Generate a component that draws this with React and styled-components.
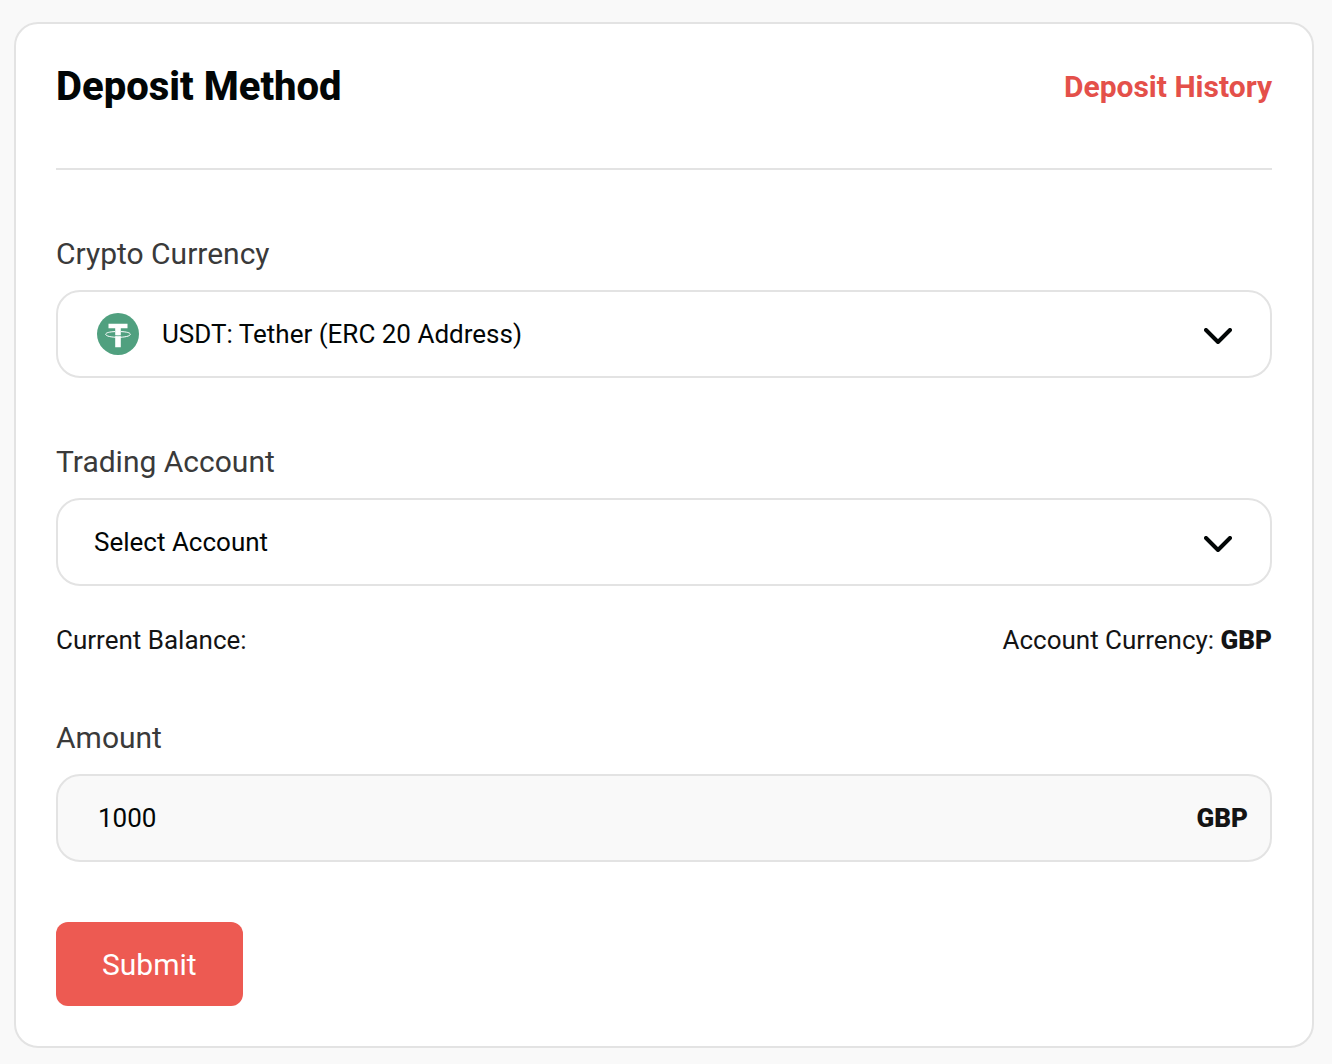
import React, { useState } from "react";
import styled, { createGlobalStyle, css } from "styled-components";

const GlobalStyle = createGlobalStyle`
  * {
    box-sizing: border-box;
  }
  body {
    margin: 0;
    background: #f9f9f9;
    color: #141414;
    font-family: Roboto, "Liberation Sans", sans-serif;
    font-size: 26px;
  }
`;

const Page = styled.main`
  padding: 22px 18px 16px 14px;
`;
const Card = styled.form`
  display: flex;
  flex-direction: column;
  padding: 40px;
  border: 2px solid #e3e3e3;
  border-radius: 24px;
  background: #fff;
`;
const Header = styled.header`
  display: flex;
  justify-content: space-between;
  align-items: center;
  padding-bottom: 58px;
  border-bottom: 2px solid #e3e3e3;
`;
const Title = styled.h1`
  margin: 0;
  font-size: 40px;
  font-weight: 800;
  line-height: 46px;
  color: #020606;
`;
const HistoryLink = styled.a`
  font-size: 30px;
  font-weight: 700;
  line-height: 46px;
  color: #e4504a;
  text-decoration: none;
`;
const Field = styled.div`
  display: flex;
  flex-direction: column;
  gap: 16px;
  margin-top: ${(props) => props.$top || 64}px;
`;
const Label = styled.label`
  font-size: 30px;
  line-height: 40px;
  color: #3a3a3a;
`;
const Control = styled.div`
  position: relative;
  display: flex;
`;
const controlStyle = css`
  flex: 1;
  min-width: 0;
  height: 88px;
  border: 2px solid #e3e3e3;
  border-radius: 24px;
  font-family: inherit;
  font-size: 26px;
  color: #020606;
`;
const Select = styled.select`
  ${controlStyle}
  appearance: none;
  padding: 0 88px 0 ${(props) => (props.$icon ? 104 : 36)}px;
  background: #fff;
  cursor: pointer;
`;
const Input = styled.input`
  ${controlStyle}
  padding: 0 88px 0 40px;
  background: #f9f9f9;
`;
const Adornment = styled.span`
  position: absolute;
  top: 0;
  bottom: 0;
  display: flex;
  align-items: center;
  pointer-events: none;
`;
const Leading = styled(Adornment)`
  left: 41px;
`;
const Arrow = styled(Adornment)`
  right: 40px;
  padding-top: 4px;
`;
const Unit = styled(Adornment)`
  right: 24px;
`;
const Currency = styled.strong`
  font-weight: 900;
  color: #141414;
`;
const BalanceRow = styled.div`
  display: flex;
  justify-content: space-between;
  margin-top: 36px;
  line-height: 36px;
`;
const SubmitButton = styled.button`
  align-self: flex-start;
  height: 84px;
  margin-top: 60px;
  padding: 0 46px;
  border: none;
  border-radius: 12px;
  background: #ed5a52;
  color: #fff;
  font-family: inherit;
  font-size: 30px;
  cursor: pointer;
`;

const TetherIcon = () => (
  <svg width="42" height="42" viewBox="0 0 42 42" aria-hidden="true">
    <circle cx="21" cy="21" r="21" fill="#50a07f" />
    <path d="M11.5 10.8h19v4.4h-6.7v19h-5.6v-19h-6.7z" fill="#fff" />
    <path
      d="M18 18.6c-5.600.2-9.300 1.200-9.300 2.700 0 1.800 5.500 3 12.300 3s12.300-1.200 12.300-3c0-1.500-3.700-2.500-9.300-2.700"
      fill="none"
      stroke="#fff"
      strokeWidth="1"
    />
    <path d="M18 22.600q3 .3 6 0" fill="none" stroke="#50a07f" strokeWidth="0.8" />
  </svg>
);

const Chevron = () => (
  <svg width="28" height="16" viewBox="0 0 28 16" aria-hidden="true">
    <path
      d="M2 2l12 12L26 2"
      fill="none"
      stroke="#020606"
      strokeWidth="4"
      strokeLinecap="round"
      strokeLinejoin="round"
    />
  </svg>
);

const App = () => {
  const [amount, setAmount] = useState("1000");

  return (
    <>
      <GlobalStyle />
      <Page>
        <Card onSubmit={(e) => e.preventDefault()}>
          <Header>
            <Title>Deposit Method</Title>
            <HistoryLink href="#history">Deposit History</HistoryLink>
          </Header>
          <Field>
            <Label htmlFor="crypto">Crypto Currency</Label>
            <Control>
              <Select id="crypto" $icon>
                <option>USDT: Tether (ERC 20 Address)</option>
              </Select>
              <Leading>
                <TetherIcon />
              </Leading>
              <Arrow>
                <Chevron />
              </Arrow>
            </Control>
          </Field>
          <Field>
            <Label htmlFor="account">Trading Account</Label>
            <Control>
              <Select id="account">
                <option>Select Account</option>
              </Select>
              <Arrow>
                <Chevron />
              </Arrow>
            </Control>
          </Field>
          <BalanceRow>
            <span>Current Balance:</span>
            <span>
              Account Currency: <Currency>GBP</Currency>
            </span>
          </BalanceRow>
          <Field $top={60}>
            <Label htmlFor="amount">Amount</Label>
            <Control>
              <Input
                id="amount"
                type="text"
                inputMode="decimal"
                value={amount}
                onChange={(e) => setAmount(e.target.value)}
              />
              <Unit>
                <Currency>GBP</Currency>
              </Unit>
            </Control>
          </Field>
          <SubmitButton type="submit">Submit</SubmitButton>
        </Card>
      </Page>
    </>
  );
};

export default App;
